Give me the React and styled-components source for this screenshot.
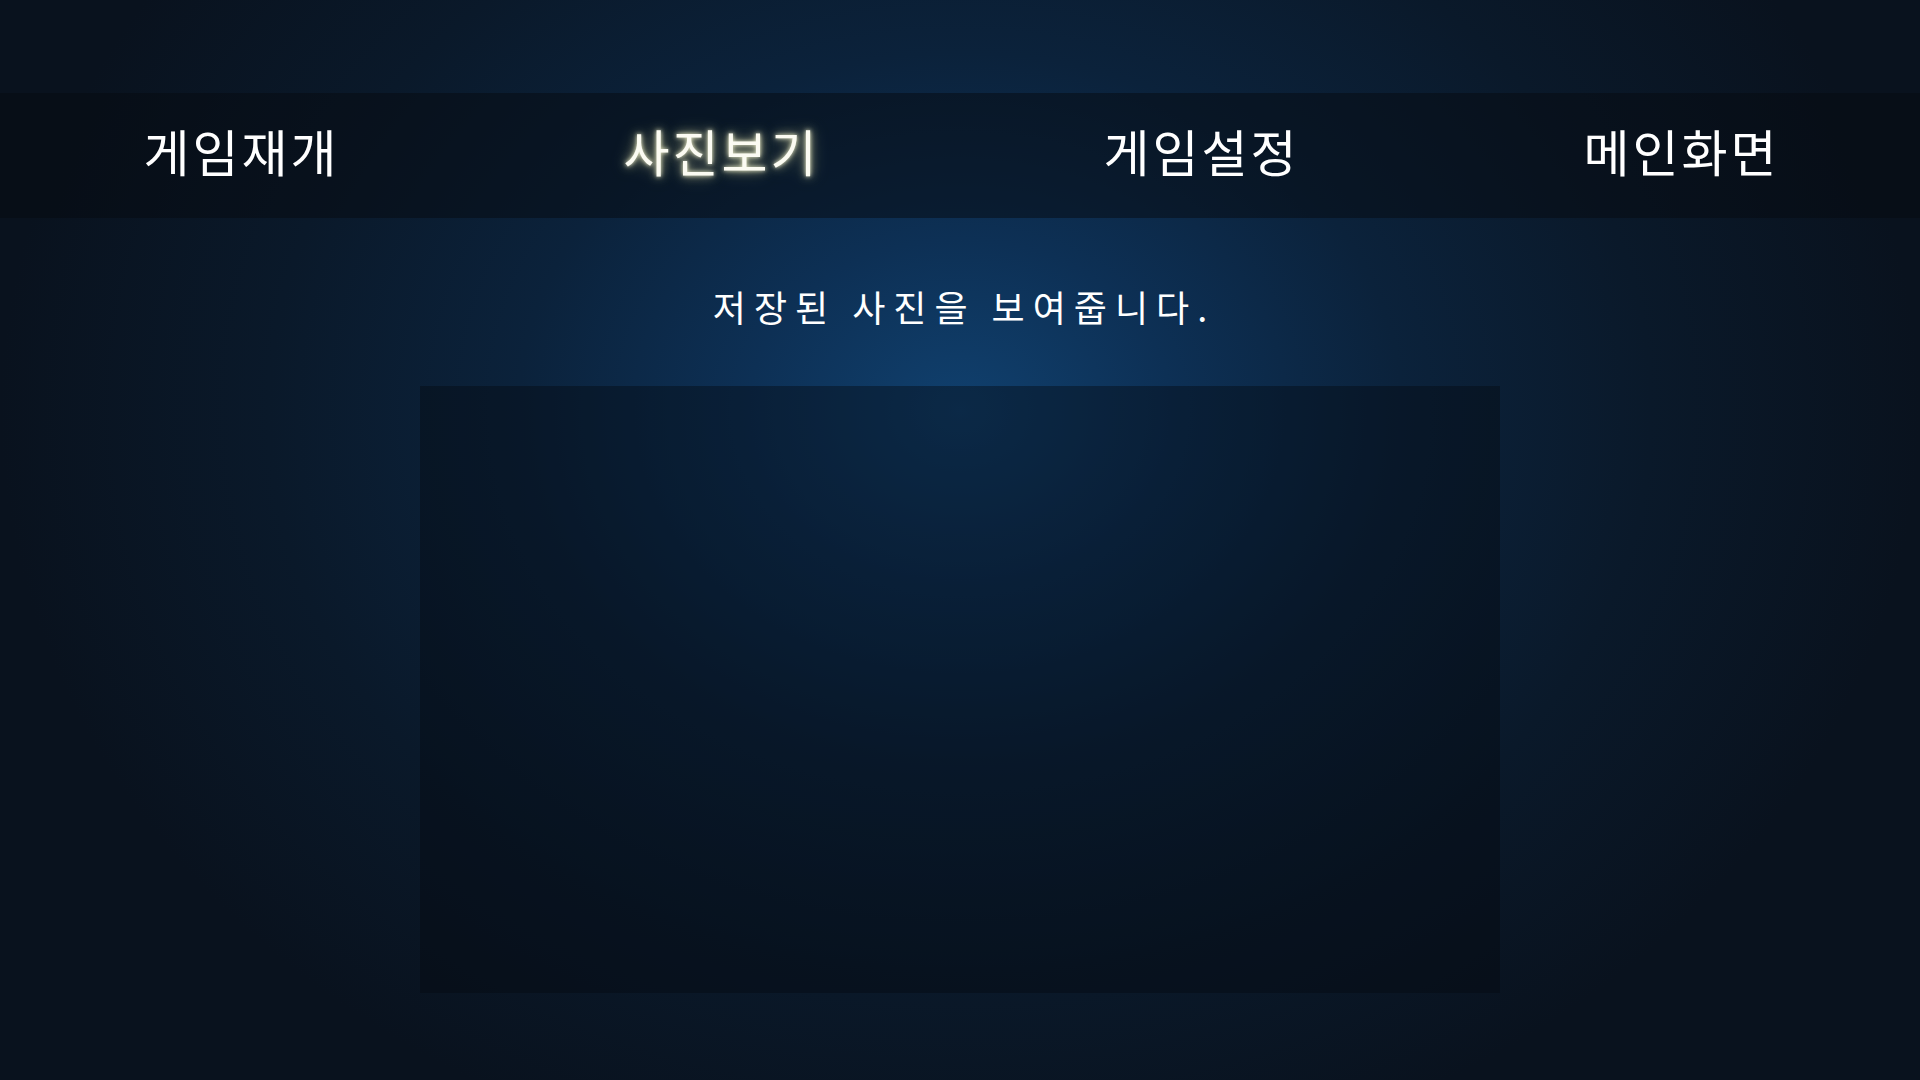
import React, { useState } from "react";
import styled, { createGlobalStyle, css } from "styled-components";

const GlobalStyle = createGlobalStyle`
	html, body {
		margin: 0;
		padding: 0;
		background: #08111c;
	}
	* {
		box-sizing: border-box;
	}
`;

const Screen = styled.div`
	width: 100vw;
	height: 100vh;
	overflow: hidden;
	display: flex;
	flex-direction: column;
	align-items: center;
	font-family: "Noto Sans CJK KR", "Noto Sans", sans-serif;
	color: #ffffff;
	background: radial-gradient(
		ellipse 50% 72% at 50% 38%,
		#10406e 0%,
		#0d3055 22%,
		#0b223b 46%,
		#0a192a 72%,
		#09121e 100%
	);
`;

const MenuBar = styled.nav`
	margin-top: 93px;
	width: 100%;
	height: 125px;
	display: grid;
	grid-template-columns: repeat(4, 1fr);
	align-items: center;
	background: rgba(5, 10, 16, 0.5);
`;

const MenuItem = styled.button`
	justify-self: center;
	background: none;
	border: none;
	padding: 0 0 12px 3px;
	cursor: pointer;
	font-family: inherit;
	font-size: 50px;
	font-weight: 400;
	letter-spacing: 3px;
	line-height: 1;
	color: #ffffff;
	${(p) =>
		p.$active &&
		css`
			color: #fbfbf2;
			text-shadow: 0 0 4px rgba(255, 255, 220, 0.9),
				0 0 10px rgba(230, 230, 170, 0.75), 0 0 18px rgba(210, 210, 150, 0.45);
		`}
`;

const Caption = styled.p`
	margin: 63px 0 0;
	height: 50px;
	line-height: 50px;
	font-size: 36px;
	letter-spacing: 8px;
	padding-left: 8px;
	color: #ffffff;
`;

const PhotoFrame = styled.div`
	margin-top: 55px;
	width: 1080px;
	height: 607px;
	background: rgba(4, 10, 16, 0.42);
`;

const menus = ["게임재개", "사진보기", "게임설정", "메인화면"];

const App = () => {
	const [active, setActive] = useState("사진보기");

	return (
		<>
			<GlobalStyle />
			<Screen>
				<MenuBar>
					{menus.map((name) => (
						<MenuItem
							key={name}
							$active={active === name}
							onClick={() => setActive(name)}
						>
							{name}
						</MenuItem>
					))}
				</MenuBar>
				<Caption>저장된 사진을 보여줍니다.</Caption>
				<PhotoFrame />
			</Screen>
		</>
	);
};

export default App;
